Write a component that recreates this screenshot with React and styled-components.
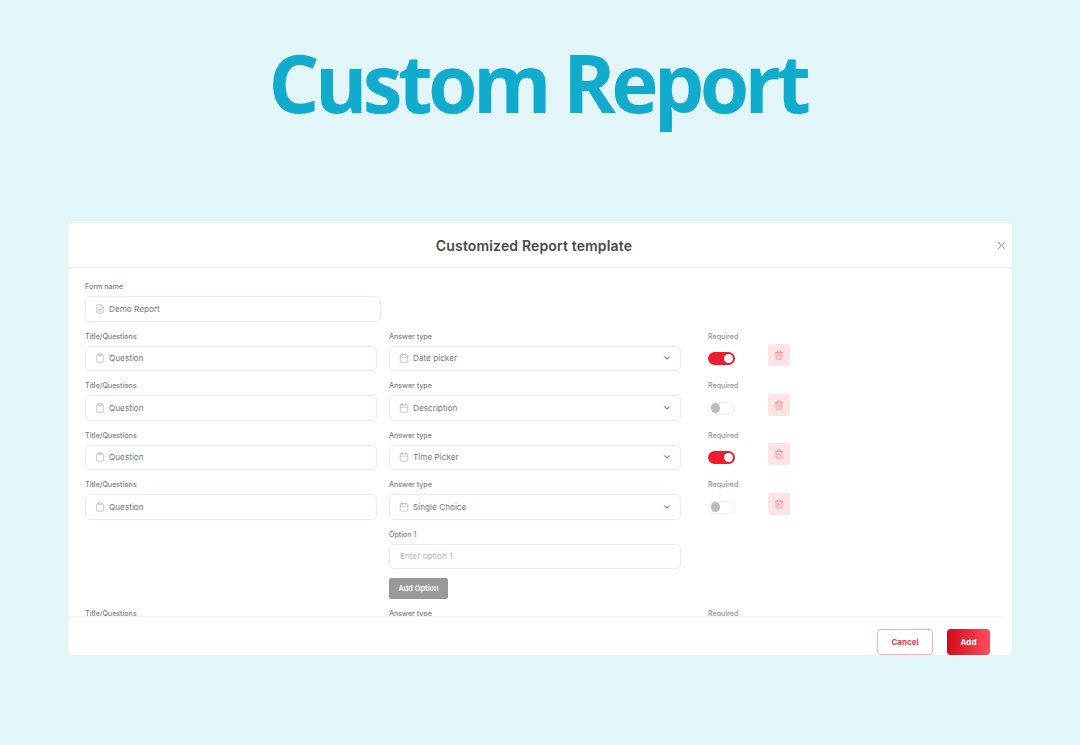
import React from 'react';
import styled, { createGlobalStyle } from 'styled-components';
import { ChevronDown, Trash2, X, Calendar, Clipboard, FileText } from 'lucide-react';

const GlobalStyle = createGlobalStyle`
  html, body {
    margin: 0;
    height: 100%;
    overflow: hidden;
    background: #e2f5f9;
  }
  * { box-sizing: border-box; }
`;

const Page = styled.div`
  width: 1080px;
  height: 745px;
  background: #e2f5f9;
  padding-top: 27px;
  display: flex;
  flex-direction: column;
  align-items: center;
`;

const Headline = styled.h1`
  margin: 0 0 87px;
  height: 109px;
  padding-right: 5px;
  font-family: "Open Sans", sans-serif;
  font-size: 80px;
  line-height: 109px;
  font-weight: 700;
  letter-spacing: -4.65px;
  color: #11accd;
`;

const Modal = styled.div`
  width: 944px;
  height: 432px;
  background: #fff;
  display: flex;
  flex-direction: column;
  font-family: Inter, sans-serif;
`;

const ModalHeader = styled.div`
  height: 45px;
  flex-shrink: 0;
  display: flex;
  align-items: center;
  justify-content: center;
  padding-right: 12px;
  position: relative;
  border-bottom: 1px solid #eaecf5;
  font-size: 14px;
  font-weight: 600;
  letter-spacing: 0.15px;
  color: #4a4a4a;
`;

const CloseButton = styled.span`
  position: absolute;
  right: 4px;
  top: 16px;
  display: flex;
  color: #777;
`;

const ModalBody = styled.div`
  flex: 1;
  overflow: hidden;
  padding: 11px 0 0 17px;
  margin-right: 9px;
  border-bottom: 1px solid #f0f0f2;
`;

const FormNameBlock = styled.div`
  width: 296px;
  margin-bottom: 7px;
`;

const Row = styled.div`
  display: grid;
  grid-template-columns: 292px 304px 87px 22px;
  height: ${p => (p.$tall ? 128.5 : 49.5)}px;
`;

const Col = styled.div`
  padding-left: ${p => p.$offset || 0}px;
`;

const Label = styled.div`
  height: 15px;
  margin-bottom: 2px;
  font-size: 7.1px;
  line-height: 15px;
  font-weight: 500;
  color: ${p => (p.$muted ? '#92959f' : '#7b7e8a')};
`;

const InputBox = styled.div`
  width: ${p => p.$width || 292}px;
  height: 25.5px;
  display: flex;
  align-items: center;
  gap: 4px;
  padding: 0 8px 0 ${p => (p.$placeholder ? 10 : 9)}px;
  border: 1px solid #e9ebf6;
  border-radius: 5px;
  background: #fff;
  font-size: 8.2px;
  color: ${p => (p.$placeholder ? '#b4b6bd' : '#75777f')};
  svg { flex-shrink: 0; }
`;

const BoxText = styled.span`
  flex: 1;
`;

const Toggle = styled.div`
  width: 27px;
  height: 13px;
  margin-top: 8.5px;
  border-radius: 7px;
  display: flex;
  align-items: center;
  padding: 0 ${p => (p.$on ? 2 : 1.5)}px;
  justify-content: ${p => (p.$on ? 'flex-end' : 'flex-start')};
  background: ${p => (p.$on ? '#ed1c2e' : '#fff')};
  border: ${p => (p.$on ? 'none' : '1px solid #eceef5')};
`;

const Knob = styled.span`
  width: 9.5px;
  height: 9.5px;
  border-radius: 50%;
  background: ${p => (p.$on ? '#fff' : '#bcbcbc')};
`;

const DeleteButton = styled.div`
  width: 22px;
  height: 22px;
  margin-top: 15.5px;
  border-radius: 2px;
  background: #ffe4e5;
  color: #ff7078;
  display: flex;
  align-items: center;
  justify-content: center;
`;

const OptionBlock = styled.div`
  margin-top: 7px;
`;

const AddOption = styled.div`
  width: 59px;
  height: 21px;
  margin-top: 9px;
  border-radius: 2px;
  background: #999;
  color: #fff;
  display: flex;
  align-items: center;
  justify-content: center;
  font-size: 7.4px;
  font-weight: 600;
`;

const Footer = styled.div`
  height: 38px;
  flex-shrink: 0;
  display: flex;
  justify-content: flex-end;
  gap: 14px;
  padding: 12px 22px 0 0;
`;

const Button = styled.div`
  height: 26px;
  width: ${p => (p.$primary ? 43 : 56)}px;
  border-radius: 4px;
  display: flex;
  align-items: center;
  justify-content: center;
  font-size: 8px;
  font-weight: 700;
  color: ${p => (p.$primary ? '#fff' : '#f0394c')};
  background: ${p => (p.$primary ? 'linear-gradient(90deg, #d20a18, #ff4d5e)' : '#fff')};
  border: ${p => (p.$primary ? 'none' : '1px solid #ffa9b0')};
`;

const rows = [
  { type: 'Date picker', on: true },
  { type: 'Description', on: false },
  { type: 'Time Picker', on: true },
  { type: 'Single Choice', on: false, option: true },
];

function QuestionRow({ type, on, option }) {
  return (
    <Row $tall={option}>
      <Col>
        <Label>Title/Questions</Label>
        <InputBox>
          <Clipboard size={10} strokeWidth={1.3} color="#9a9ca3" />
          <BoxText>Question</BoxText>
        </InputBox>
      </Col>
      <Col $offset={12}>
        <Label>Answer type</Label>
        <InputBox>
          <Calendar size={10} strokeWidth={1.3} color="#9a9ca3" />
          <BoxText>{type}</BoxText>
          <ChevronDown size={10} strokeWidth={2} color="#3b3b3b" />
        </InputBox>
        {option && (
          <OptionBlock>
            <Label>Option 1</Label>
            <InputBox $placeholder>Enter option 1</InputBox>
            <AddOption>Add Option</AddOption>
          </OptionBlock>
        )}
      </Col>
      <Col $offset={27}>
        <Label $muted>Required</Label>
        <Toggle $on={on}><Knob $on={on} /></Toggle>
      </Col>
      <Col>
        <DeleteButton><Trash2 size={10} strokeWidth={1.5} /></DeleteButton>
      </Col>
    </Row>
  );
}

export default function App() {
  return (
    <Page>
      <GlobalStyle />
      <Headline>Custom Report</Headline>
      <Modal>
        <ModalHeader>
          Customized Report template
          <CloseButton><X size={13} strokeWidth={1.3} /></CloseButton>
        </ModalHeader>
        <ModalBody>
          <FormNameBlock>
            <Label>Form name</Label>
            <InputBox $width={296}>
              <FileText size={10} strokeWidth={1.3} color="#9a9ca3" />
              <BoxText>Demo Report</BoxText>
            </InputBox>
          </FormNameBlock>
          {rows.map(r => <QuestionRow key={r.type} {...r} />)}
          <Row>
            <Col><Label>Title/Questions</Label></Col>
            <Col $offset={12}><Label>Answer type</Label></Col>
            <Col $offset={27}><Label $muted>Required</Label></Col>
          </Row>
        </ModalBody>
        <Footer>
          <Button>Cancel</Button>
          <Button $primary>Add</Button>
        </Footer>
      </Modal>
    </Page>
  );
}
